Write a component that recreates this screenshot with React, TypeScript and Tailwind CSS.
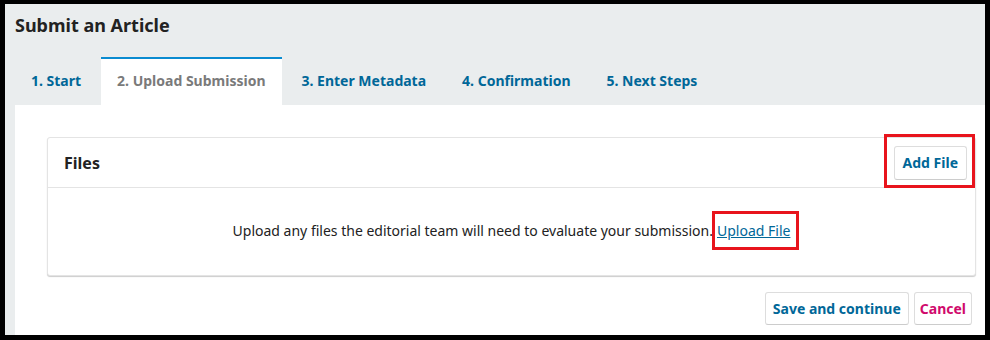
import React from "react";

const font = { fontFamily: '"Noto Sans", "Open Sans", sans-serif' };

export default function App() {
  const tabs = ["1. Start", "2. Upload Submission", "3. Enter Metadata", "4. Confirmation", "5. Next Steps"];
  return (
    <div className="w-[990px] h-[340px] bg-black pt-[4px] px-[5px] pb-[5px]" style={font}>
      <div className="flex flex-col h-full bg-[#eaedee]">
        <div className="h-[42px] pl-[10px] pt-[9px] text-[18px] font-bold text-[#222] leading-[24px]">
          Submit an Article
        </div>
        <div className="flex gap-[4px] pl-[10px] h-[48px] shrink-0 mt-[11px]">
          {tabs.map((t, i) =>
            i === 1 ? (
              <div
                key={t}
                className="px-4 bg-white border-t-2 border-[#0a8bd0] flex items-center text-[14px] font-bold text-[#7a7a7a] pb-[3px]"
              >
                {t}
              </div>
            ) : (
              <div key={t} className="px-4 flex items-center text-[14px] font-bold text-[#006798] border-t-2 border-transparent pb-[3px]">
                {t}
              </div>
            )
          )}
        </div>
        <div className="flex-1 bg-white ml-[10px] pl-[32px] pr-[9px] pt-[32px]">
          <div className="rounded-[3px] border border-[#e4e4e4] shadow-[0_1px_1px_rgba(0,0,0,0.2)] bg-white">
            <div className="h-[50px] flex items-center justify-between pl-[16px] pr-[8px] border-b border-[#e4e4e4]">
              <div className="text-[16px] font-bold text-[#222]">Files</div>
              <div className="relative">
                <div className="h-[34px] px-[8px] flex items-center rounded-[3px] border border-[#ddd] border-b-[#ccc] text-[14px] font-bold text-[#006798]">
                  Add File
                </div>
                <div className="absolute -left-[10px] -right-[8px] -top-[12px] -bottom-[8px] border-[3px] border-[#e8141c]" />
              </div>
            </div>
            <div className="h-[87px] flex items-center justify-center text-[14px] text-[#222] pb-[2px]">
              <span>Upload any files the editorial team will need to evaluate your submission.</span>
              <span className="relative ml-[4px]">
                <span className="text-[#006798] underline">Upload File</span>
                <span className="absolute -left-[5px] -right-[9px] -top-[9px] -bottom-[9px] border-[3px] border-[#e8141c]" />
              </span>
            </div>
          </div>
          <div className="flex justify-end gap-[5px] mt-[16px] pr-[4px]">
            <div className="h-[33px] px-[7px] flex items-center rounded-[3px] border border-[#ddd] border-b-[#ccc] text-[14px] font-bold text-[#006798]">
              Save and continue
            </div>
            <div className="h-[33px] px-[5px] flex items-center rounded-[3px] border border-[#ddd] border-b-[#ccc] text-[14px] font-bold text-[#d00a6c]">
              Cancel
            </div>
          </div>
        </div>
      </div>
    </div>
  );
}
